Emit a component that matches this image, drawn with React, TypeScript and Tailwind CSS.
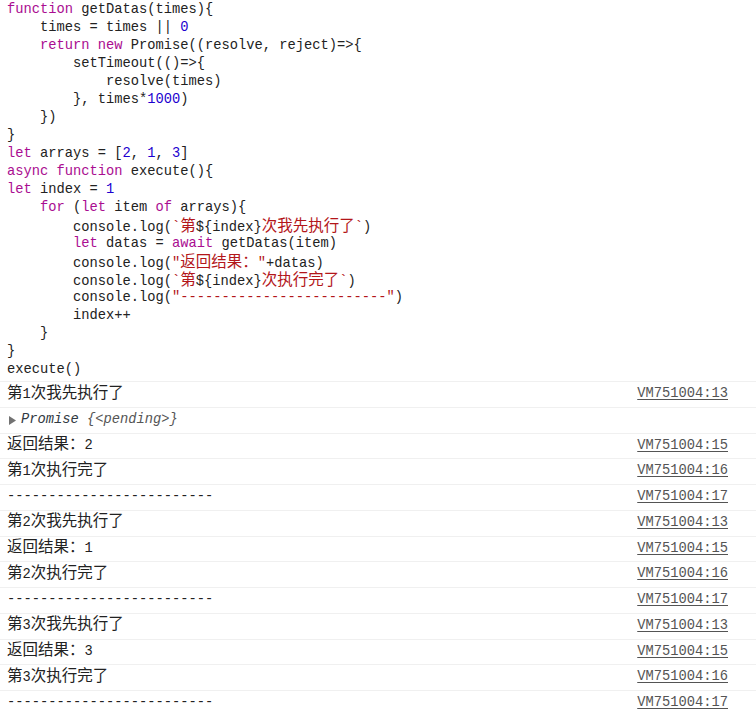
import React from 'react'

type Tok = [string, string]

const codeLines: Tok[][] = [
  [['k', 'function'], ['p', ' getDatas(times){']],
  [['p', '    times = times || '], ['n', '0']],
  [['p', '    '], ['k', 'return'], ['p', ' '], ['k', 'new'], ['p', ' Promise((resolve, reject)=>{']],
  [['p', '        setTimeout(()=>{']],
  [['p', '            resolve(times)']],
  [['p', '        }, times*'], ['n', '1000'], ['p', ')']],
  [['p', '    })']],
  [['p', '}']],
  [['k', 'let'], ['p', ' arrays = ['], ['n', '2'], ['p', ', '], ['n', '1'], ['p', ', '], ['n', '3'], ['p', ']']],
  [['k', 'async'], ['p', ' '], ['k', 'function'], ['p', ' execute(){']],
  [['k', 'let'], ['p', ' index = '], ['n', '1']],
  [['p', '    '], ['k', 'for'], ['p', ' ('], ['k', 'let'], ['p', ' item '], ['k', 'of'], ['p', ' arrays){']],
  [['p', '        console.log('], ['s', '`第'], ['p', '${index}'], ['s', '次我先执行了`'], ['p', ')']],
  [['p', '        '], ['k', 'let'], ['p', ' datas = '], ['k', 'await'], ['p', ' getDatas(item)']],
  [['p', '        console.log('], ['s', '"返回结果："'], ['p', '+datas)']],
  [['p', '        console.log('], ['s', '`第'], ['p', '${index}'], ['s', '次执行完了`'], ['p', ')']],
  [['p', '        console.log('], ['s', '"-------------------------"'], ['p', ')']],
  [['p', '        index++']],
  [['p', '    }']],
  [['p', '}']],
  [['p', 'execute()']],
]

const tokColor: Record<string, string> = {
  k: 'text-[#aa0d91]',
  n: 'text-[#1c00cf]',
  s: 'text-[#b3161a]',
  p: 'text-[#222222]',
}

// wrap CJK runs so they get the wider glyph size
function Mixed({ text }: { text: string }) {
  const parts = text.split(/([\u3000-\u9fff\uff00-\uffef]+)/)
  return (
    <>
      {parts.map((part, i) =>
        /[\u3000-\u9fff\uff00-\uffef]/.test(part) ? (
          <span key={i} className="text-[15.5px] leading-none font-['Noto_Sans_CJK_SC',sans-serif]">
            {part}
          </span>
        ) : (
          <span key={i}>{part}</span>
        ),
      )}
    </>
  )
}

const dashes = '-------------------------'

const logs: { text: string; src?: string; promise?: boolean }[] = [
  { text: '第1次我先执行了', src: 'VM751004:13' },
  { text: '', promise: true },
  { text: '返回结果：2', src: 'VM751004:15' },
  { text: '第1次执行完了', src: 'VM751004:16' },
  { text: dashes, src: 'VM751004:17' },
  { text: '第2次我先执行了', src: 'VM751004:13' },
  { text: '返回结果：1', src: 'VM751004:15' },
  { text: '第2次执行完了', src: 'VM751004:16' },
  { text: dashes, src: 'VM751004:17' },
  { text: '第3次我先执行了', src: 'VM751004:13' },
  { text: '返回结果：3', src: 'VM751004:15' },
  { text: '第3次执行完了', src: 'VM751004:16' },
  { text: dashes, src: 'VM751004:17' },
]

export default function App() {
  return (
    <main className="w-[756px] h-[709px] overflow-hidden bg-white font-['Liberation_Mono','Noto_Sans_CJK_SC',monospace] text-[13.75px]">
      <div className="pl-[7px] pt-[1px] pb-[2px]">
        {codeLines.map((line, i) => (
          <div key={i} className="h-[18px] leading-[18px] whitespace-pre overflow-visible">
            {line.map(([t, s], j) => (
              <span key={j} className={tokColor[t]}>
                <Mixed text={s} />
              </span>
            ))}
          </div>
        ))}
      </div>

      {logs.map((log, i) => (
        <div
          key={i}
          className="h-[25.75px] border-t border-[#f0f0f0] flex items-center justify-between pl-[7px] pr-[28px] whitespace-pre text-[#222222]"
        >
          {log.promise ? (
            <div className="flex items-center italic">
              <svg width="8" height="9" viewBox="0 0 8 9" className="ml-[2px] mr-[4px]">
                <path d="M0 0 L7 4.5 L0 9 Z" fill="#727272" />
              </svg>
              <span className="text-[#303942]">Promise </span>
              <span className="text-[#555555]">{'{<pending>}'}</span>
            </div>
          ) : (
            <div>
              <Mixed text={log.text} />
            </div>
          )}
          {log.src && <span className="text-[#545454] underline underline-offset-2">{log.src}</span>}
        </div>
      ))}
    </main>
  )
}
